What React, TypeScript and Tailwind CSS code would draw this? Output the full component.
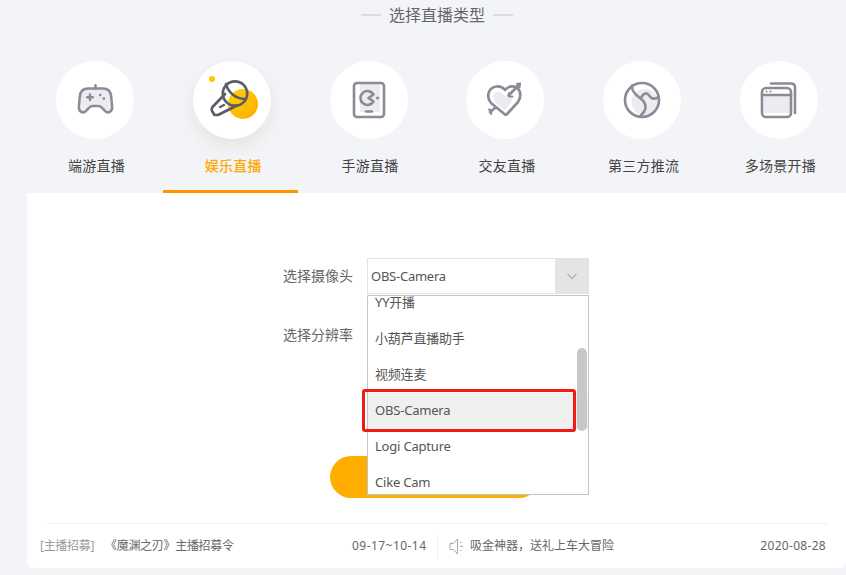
import React from "react";

const ink = "#8b8b97";
const fillSoft = "#ececf0";

const Gamepad = () => (
	<svg width="37" height="37" viewBox="0 0 40 40" fill="none" stroke={ink} strokeWidth="2.700" strokeLinejoin="round" strokeLinecap="round">
		<path d="M12 7H28C33.500 7 36.500 10 37 16L38 27C38.300 32 33.500 34.500 30.500 31.500L26.500 27.500C25.500 26.500 24.500 26 23 26H17C15.500 26 14.500 26.500 13.500 27.500L9.500 31.500C6.500 34.500 1.700 32 2 27L3 16C3.500 10 6.500 7 12 7Z" fill={fillSoft} />
		<path d="M20 3.500V7" />
		<path d="M14 13.500V19.500M11 16.500H17" />
		<path d="M25 14H25.100M29 18H29.100" strokeWidth="2.800" />
	</svg>
);

const Mic = () => (
	<svg width="60" height="60" viewBox="0 0 60 60" fill="none">
		<defs>
			<linearGradient id="micGold" x1="0" y1="0" x2="1" y2="1">
				<stop offset="0" stopColor="#ffd400" />
				<stop offset="1" stopColor="#ffab00" />
			</linearGradient>
		</defs>
		<circle cx="10" cy="9" r="3" fill="#ffc800" />
		<circle cx="41" cy="34" r="15" fill="url(#micGold)" />
		<g stroke="#5c5c68" strokeWidth="2.700" strokeLinecap="round" strokeLinejoin="round">
			<circle cx="33" cy="23.500" r="12.200" />
			<path d="M24 14C26 22 33 29 44 29" />
			<path d="M23 24L10.500 37C9.500 38.500 9.500 41 10.700 42L12.500 45H16L35 35.500" />
			<path d="M18 37L22 35" strokeWidth="2.200" />
		</g>
	</svg>
);

const Phone = () => (
	<svg width="40" height="40" viewBox="0 0 40 40" fill="none" stroke={ink} strokeWidth="2.600" strokeLinecap="round" strokeLinejoin="round">
		<path d="M11 4H31V32H11Z" fill={fillSoft} stroke="none" />
		<rect x="5" y="3" width="30" height="34" rx="3" />
		<path d="M24.500 21.500A7 7 0 1 1 24.500 14.500L19.500 18Z" />
		<path d="M28.500 18H28.600" strokeWidth="3" />
		<path d="M17 31.500H23" />
	</svg>
);

const Heart = () => (
	<svg width="40" height="40" viewBox="0 0 40 40" fill="none" stroke={ink} strokeWidth="2.700" strokeLinecap="round" strokeLinejoin="round">
		<path d="M8 16C8 12 13 10.500 16.500 13L20 16L24 18L28 17L26 23L19.500 30.500L11 23Z" fill={fillSoft} stroke="none" />
		<path d="M20 34.500L6 23C1 17 3 8 11 6.500C15 6 18 7.500 20 10C23 6.500 27 5.500 31 7C36 10 36.500 17 33 22L22 34C21.500 34.800 20.500 35 20 34.500Z" />
		<path d="M23.500 15.500L34.500 4.500" />
		<path d="M31 3L36 2.500L35.500 8L32 8Z" fill={ink} stroke="none" />
		<path d="M24 13V16.500H27.500" strokeWidth="2" />
		<path d="M5 32L10 28" />
		<path d="M4 29.500L6.500 30.500L6 34" strokeWidth="2" />
	</svg>
);

const Swirl = () => (
	<svg width="40" height="40" viewBox="0 0 40 40" fill="none" stroke={ink} strokeWidth="2.600" strokeLinecap="round">
		<circle cx="22.500" cy="22" r="13" fill={fillSoft} stroke="none" />
		<circle cx="20" cy="20" r="17" />
		<path d="M10 5.500C9.500 9.500 11.500 13.500 18.300 18.300C22 21 24 23.500 23.500 28C23 31 21 33.500 18.300 36" />
		<path d="M19.500 17C21 14.500 23.500 13 25.500 13.800C27.500 15 28 18.300 31 18.600C33.500 18.800 35.500 17.800 36.700 16.700" />
	</svg>
);

const Windows = () => (
	<svg width="40" height="40" viewBox="0 0 40 40" fill="none" stroke={ink} strokeWidth="2.600" strokeLinecap="round" strokeLinejoin="round">
		<rect x="5" y="15" width="26" height="18" fill={fillSoft} stroke="none" />
		<rect x="3" y="8" width="29" height="29" rx="4" />
		<path d="M3 15H32" />
		<path d="M7.500 11.500H7.600M11.500 11.500H11.600" strokeWidth="2" />
		<path d="M12 3.500H32C34.500 3.500 36 5 36 7.500V33" />
	</svg>
);

const tabs = [
	{ label: "端游直播", icon: <Gamepad /> },
	{ label: "娱乐直播", icon: <Mic />, active: true },
	{ label: "手游直播", icon: <Phone /> },
	{ label: "交友直播", icon: <Heart /> },
	{ label: "第三方推流", icon: <Swirl /> },
	{ label: "多场景开播", icon: <Windows /> },
];

const options = ["YY开播", "小葫芦直播助手", "视频连麦", "OBS-Camera", "Logi Capture", "Cike Cam"];

const App = () => {
	return (
		<div className="relative w-[846px] h-[575px] overflow-hidden bg-[#f3f4f8] pl-[27px] pb-[7px] flex flex-col font-['Noto_Sans','Noto_Sans_CJK_SC',sans-serif] text-[#555]">
			<div className="h-[30px] w-[820px] flex items-center justify-center gap-2 text-base text-[#666]">
				<span className="w-5 h-[2px] bg-[#dcdcdc]" />
				<span className="leading-none">选择直播类型</span>
				<span className="w-5 h-[2px] bg-[#dcdcdc]" />
			</div>

			<div className="flex w-[821px] h-[163px] pt-[31px] -ml-[0.4px]">
				{tabs.map((tab) => (
					<div key={tab.label} className="relative w-[136.8px] shrink-0 flex flex-col items-center">
						<div className={`w-[78px] h-[78px] rounded-full bg-white flex items-center justify-center ${tab.active ? "shadow-[0_8px_16px_rgba(190,160,110,0.18)]" : ""}`}>
							{tab.icon}
						</div>
						<span className={`mt-[17px] ml-[3px] text-sm leading-5 tracking-[0.25px] ${tab.active ? "font-medium text-[#ffa800]" : "text-[#444]"}`}>
							{tab.label}
						</span>
						{tab.active && <div className="absolute left-0 bottom-0 w-[135px] h-[3px] bg-[#ff9500]" />}
					</div>
				))}
			</div>

			<div className="relative flex-1 bg-white rounded-b-md flex flex-col">
				<div className="flex-1 flex flex-col pt-[65px] pl-[256px]">
					<div className="flex items-center h-[36px] text-sm text-[#666]">
						<span className="w-[84px]">选择摄像头</span>
						<div className="w-[222px] h-[36px] border border-[#e4e4e4] flex items-center justify-between">
							<span className="pl-[3px] text-[13px] tracking-[-0.25px] text-[#555]">OBS-Camera</span>
							<span className="w-[33px] h-full bg-[#e4e4e4] flex items-center justify-center">
								<svg width="10" height="7" viewBox="0 0 10 7" fill="none" stroke="#b0b0b0" strokeWidth="1.200">
									<path d="M0.500 1L5 5.500L9.500 1" />
								</svg>
							</span>
						</div>
					</div>
					<div className="mt-[23px] h-[36px] flex items-center text-sm text-[#666]">选择分辨率</div>
				</div>

				{/* 开播按钮 under the list */}
				<div className="absolute left-[303px] top-[263px] w-[210px] h-[42px] rounded-full bg-[#ffae00]" />

				{/* open list */}
				<div className="absolute left-[340px] top-[102px] w-[222px] h-[200px] border border-[#b8c8d0] bg-white overflow-hidden">
					<div className="-mt-[11px] flex flex-col">
						{options.map((opt) => (
							<div key={opt} className={`h-[36px] shrink-0 flex items-center pl-[7px] text-[13px] tracking-[-0.2px] text-[#555] ${opt === "OBS-Camera" ? "bg-[#efefef]" : ""}`}>
								{opt}
							</div>
						))}
					</div>
					<div className="absolute right-[1px] top-[52px] w-[10px] h-[83px] rounded-full bg-[#c8c8c8]" />
				</div>
				<div className="absolute left-[335px] top-[196px] w-[214px] h-[43px] rounded-[3px] border-[3px] border-[#f01c14]" />

				<div className="ml-[20px] mr-[19px] h-px bg-[#eeeff2]" />
				<div className="h-[44px] flex items-center pl-[13px] pr-[20px] text-xs text-[#666]">
					<span className="w-[65px] tracking-[-0.3px] text-[#999]">[主播招募]</span>
					<span className="w-[247px] tracking-[-0.3px]">《魔渊之刃》主播招募令</span>
					<span className="w-[85px] tracking-[0.45px]">09-17~10-14</span>
					<span className="w-px h-[24px] bg-[#eeeff2] mr-[11px]" />
					<svg width="16" height="17" viewBox="0 0 16 17" fill="none" stroke="#a8a8a8" strokeWidth="1" className="mr-[5px]">
						<path d="M1 5.500H4.500L8.500 1V16L4.500 11.500H1Z" />
						<path d="M11 4.500H12.500M11 8.500H14M11 12.500H12.500" />
					</svg>
					<span>吸金神器，送礼上车大冒险</span>
					<span className="ml-auto tracking-[0.3px]">2020-08-28</span>
				</div>
			</div>
		</div>
	);
};

export default App;
